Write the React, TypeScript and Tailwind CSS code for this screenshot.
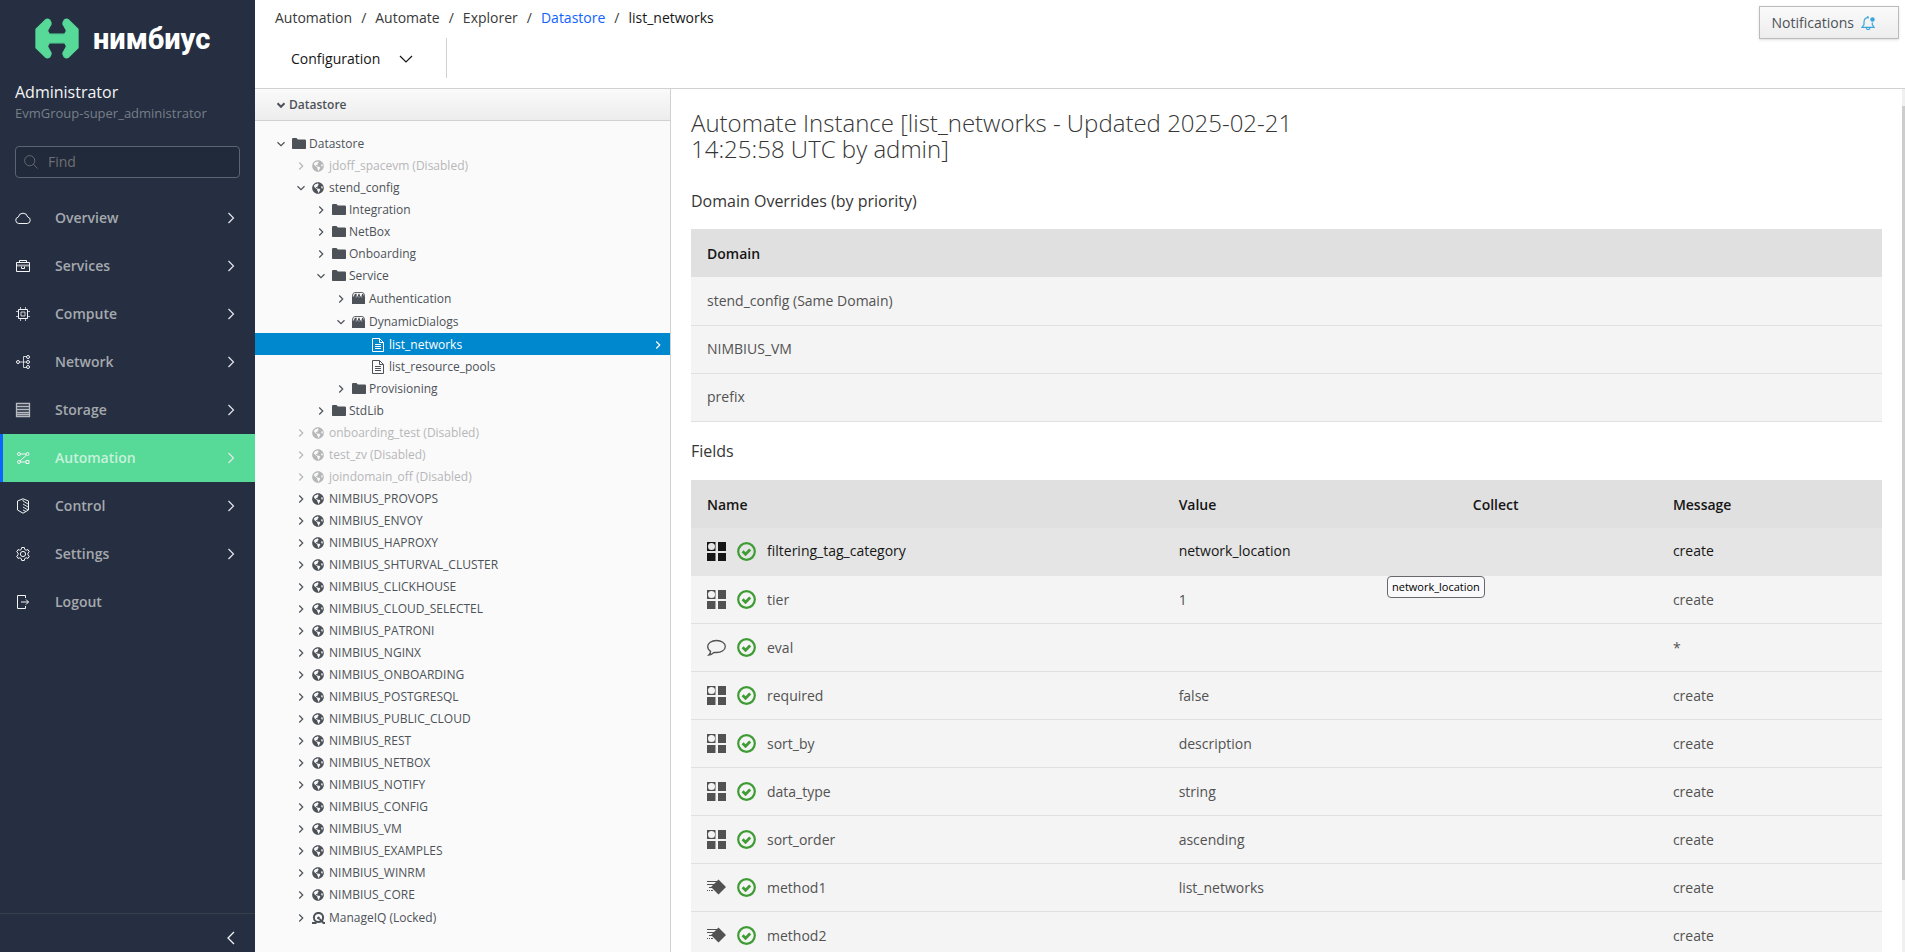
import React, { useState } from 'react';
import { FaGlobeAmericas } from 'react-icons/fa';

type TreeIcon = 'folder' | 'globe' | 'class' | 'file' | 'manageiq';

interface TreeNode {
  level: number;
  icon: TreeIcon;
  label: string;
  open?: boolean;
  leaf?: boolean;
  disabled?: boolean;
}

interface Field {
  icon: 'attribute' | 'assertion' | 'method';
  name: string;
  value: string;
  message: string;
}

const Svg: React.FC<{ children: React.ReactNode; className?: string }> = ({ children, className = 'w-4 h-4' }) => (
  <svg viewBox="0 0 16 16" className={`shrink-0 ${className}`} fill="none" stroke="currentColor" aria-hidden="true">
    {children}
  </svg>
);

const menu: { label: string; icon: React.ReactNode }[] = [
  {
    label: 'Overview',
    icon: <path d="M12.200 13.500H3.800a3.300 3.300 0 0 1-.5-6.500 4.800 4.800 0 0 1 9.400 0 3.300 3.300 0 0 1-.5 6.500z" />,
  },
  {
    label: 'Services',
    icon: (
      <>
        <path d="M1.5 4.5h13v9h-13zM4.5 4.500V2.500h7v2M6.500 8.500v2h3v-2" />
        <path d="M1.500 7.500h13" strokeOpacity=".6" strokeWidth="2" />
      </>
    ),
  },
  {
    label: 'Compute',
    icon: (
      <>
        <path d="M3.500 3.500h9v9h-9z" />
        <path d="M6 6h4v4H6z" strokeOpacity=".8" />
        <path d="M5.500 1v2m5-2v2m-5 10v2m5-2v2M1 5.500h2m-2 5h2m10-5h2m-2 5h2" strokeOpacity=".7" />
      </>
    ),
  },
  {
    label: 'Network',
    icon: (
      <>
        <circle cx="3" cy="8" r="1.500" />
        <circle cx="13" cy="3" r="1.500" />
        <circle cx="13" cy="8" r="1.500" />
        <circle cx="13" cy="13" r="1.500" />
        <path d="M4.500 8h7M11.500 2.500h-3v11h3" strokeOpacity=".8" />
      </>
    ),
  },
  {
    label: 'Storage',
    icon: <path d="M1.500 1.500h13v13h-13zM2 4.500h12M2 7.500h12M2 10.500h12M2 12.500h12" strokeOpacity=".7" strokeWidth="1.300" />,
  },
  {
    label: 'Automation',
    icon: (
      <>
        <circle cx="4" cy="4" r="1.500" />
        <circle cx="12.500" cy="4" r="1.500" />
        <circle cx="4" cy="12" r="1.500" />
        <path d="M11 10.500h3v3h-3zM5.500 4H11M5.500 12H11M5 11l6.500-6" />
      </>
    ),
  },
  {
    label: 'Control',
    icon: (
      <>
        <path d="M8 .8 2.500 3v9L8 15.200l5.500-3.200V3z" />
        <path d="m8 3 5 3M8 6l5 3M8 9l5 3M8 12l3 1.500M8 2v1" strokeOpacity=".9" />
      </>
    ),
  },
  {
    label: 'Settings',
    icon: (
      <>
        <circle cx="8" cy="8" r="2.600" />
        <path d="M6.700 1.500h2.600l.4 1.900 1.400.8 1.900-.6 1.300 2.200-1.400 1.300v1.800l1.400 1.300-1.300 2.200-1.900-.6-1.400.8-.4 1.900H6.700l-.4-1.900-1.400-.8-1.900.6-1.300-2.200 1.400-1.300V7.100L1.700 5.800 3 3.600l1.900.6 1.400-.8z" />
      </>
    ),
  },
  {
    label: 'Logout',
    icon: <path d="M10.500 4V1.500h-8v13h8V12M6 8h7.500M11 5.500 13.500 8 11 10.500" />,
  },
];

const domains = [
  'PROVOPS', 'ENVOY', 'HAPROXY', 'SHTURVAL_CLUSTER', 'CLICKHOUSE', 'CLOUD_SELECTEL', 'PATRONI',
  'NGINX', 'ONBOARDING', 'POSTGRESQL', 'PUBLIC_CLOUD', 'REST', 'NETBOX', 'NOTIFY', 'CONFIG', 'VM',
  'EXAMPLES', 'WINRM', 'CORE',
];

const tree: TreeNode[] = [
  { level: 0, icon: 'folder', label: 'Datastore', open: true },
  { level: 1, icon: 'globe', label: 'jdoff_spacevm (Disabled)', disabled: true },
  { level: 1, icon: 'globe', label: 'stend_config', open: true },
  { level: 2, icon: 'folder', label: 'Integration' },
  { level: 2, icon: 'folder', label: 'NetBox' },
  { level: 2, icon: 'folder', label: 'Onboarding' },
  { level: 2, icon: 'folder', label: 'Service', open: true },
  { level: 3, icon: 'class', label: 'Authentication' },
  { level: 3, icon: 'class', label: 'DynamicDialogs', open: true },
  { level: 4, icon: 'file', label: 'list_networks', leaf: true },
  { level: 4, icon: 'file', label: 'list_resource_pools', leaf: true },
  { level: 3, icon: 'folder', label: 'Provisioning' },
  { level: 2, icon: 'folder', label: 'StdLib' },
  { level: 1, icon: 'globe', label: 'onboarding_test (Disabled)', disabled: true },
  { level: 1, icon: 'globe', label: 'test_zv (Disabled)', disabled: true },
  { level: 1, icon: 'globe', label: 'joindomain_off (Disabled)', disabled: true },
  ...domains.map((name): TreeNode => ({ level: 1, icon: 'globe', label: `NIMBIUS_${name}` })),
  { level: 1, icon: 'manageiq', label: 'ManageIQ (Locked)' },
];

const indents = ['pl-[17px]', 'pl-[37px]', 'pl-[57px]', 'pl-[77px]', 'pl-[97px]'];

const rowHeight = ({ icon, open }: TreeNode) => {
  if (icon !== 'class' && icon !== 'manageiq') return 'h-[22px]';
  return open ? 'h-6' : 'h-[23px]';
};

const overrides = ['stend_config (Same Domain)', 'NIMBIUS_VM', 'prefix'];

const fields: Field[] = [
  { icon: 'attribute', name: 'filtering_tag_category', value: 'network_location', message: 'create' },
  { icon: 'attribute', name: 'tier', value: '1', message: 'create' },
  { icon: 'assertion', name: 'eval', value: '', message: '*' },
  { icon: 'attribute', name: 'required', value: 'false', message: 'create' },
  { icon: 'attribute', name: 'sort_by', value: 'description', message: 'create' },
  { icon: 'attribute', name: 'data_type', value: 'string', message: 'create' },
  { icon: 'attribute', name: 'sort_order', value: 'ascending', message: 'create' },
  { icon: 'method', name: 'method1', value: 'list_networks', message: 'create' },
  { icon: 'method', name: 'method2', value: '', message: 'create' },
];

const Logo = () => (
  <div className="flex items-center gap-[14px] pl-[35px] pt-[18px]">
    <svg viewBox="0 0 132 122" className="w-11 h-[41px]" fill="#57d998" stroke="#57d998" strokeWidth="4" strokeLinejoin="round" aria-hidden="true">
      <path d="M3 33 33 4q5-2 11 2l4 8q1 6-3 9l-6 11q-3 5 1 9l3 5h46l3-5q4-4 1-9l-6-11q-4-3-3-9l4-8q6-4 11-2l30 29v56l-30 29q-5 2-11-2l-4-8q-1-6 3-9l6-11q3-5-1-9l-3-5H43l-3 5q-4 4-1 9l6 11q4 3 3 9l-4 8q-6 4-11 2L3 89z" />
    </svg>
    <span className="font-[Roboto,sans-serif] text-[29px] leading-[38px] font-extrabold text-white">нимбиус</span>
  </div>
);

const Angle: React.FC<{ open?: boolean; bold?: boolean }> = ({ open, bold }) => (
  <Svg className="w-2 h-2">
    <path d={open ? 'M1 4.500l7 7 7-7' : 'M4.500 1l7 7-7 7'} strokeWidth={bold ? 4 : 2.400} />
  </Svg>
);

const NodeIcon: React.FC<{ type: TreeIcon }> = ({ type }) => {
  switch (type) {
    case 'folder':
      return (
        <svg viewBox="0 0 15 12" className="w-[14px] h-[11px] mb-0.5" fill="currentColor" aria-hidden="true" preserveAspectRatio="none">
          <path d="M0 1.200Q0 0 1.200 0h3.600L6.300 1.700h7.500Q15 1.700 15 3v8.200q0 .8-.8.8H.8Q0 12 0 11.200z" />
        </svg>
      );
    case 'globe':
      return <FaGlobeAmericas className="w-3 h-3" />;
    case 'class':
      return (
        <svg viewBox="0 0 14 13" className="w-[13px] h-3 mb-px" aria-hidden="true" preserveAspectRatio="none">
          <path d="M2.500.5h9q2 .5 2 4.500v7.500H.500V5q0-4 2-4.500z" fill="none" stroke="currentColor" />
          <path d="M0 5h14v8H0zM3 2h2v3H2zm4 0h1l1 3H6zm4 0h1l1 3h-3z" fill="currentColor" />
          <path d="M4 5h1v1H4zm3 0h1v1H7zm3 0h1v1h-1z" fill="#ddd" />
        </svg>
      );
    case 'file':
      return (
        <svg viewBox="0 0 12 14" className="w-3 h-[14px]" fill="none" stroke="currentColor" aria-hidden="true">
          <path d="M.5.500h7l4 4v9H.500zM7.500.500v4h4M3 6.500h6M3 8.500h6M3 10.500h6" />
        </svg>
      );
    default:
      return (
        <svg viewBox="0 0 13 12" className="w-[13px] h-3" fill="none" stroke="currentColor" aria-hidden="true">
          <circle cx="6.500" cy="5.500" r="4.600" strokeWidth="2" />
          <path d="M0 11h4.500M7.500 7l4 4H13" strokeWidth="1.800" />
          <circle cx="6.500" cy="6" r="1" fill="currentColor" />
        </svg>
      );
  }
};

const FieldIcon: React.FC<{ type: Field['icon'] }> = ({ type }) => {
  if (type === 'attribute') {
    return (
      <svg viewBox="0 0 19 19" className="w-[19px] h-[19px]" fill="currentColor" aria-hidden="true">
        <path d="M11 0h8v9h-8zM0 11h8v8H0zM11 11h8v8h-8zM0 0h8v9H0zM4.500 1Q1 1 1 4.500T4.500 8 8 4.500 4.500 1z" fillRule="evenodd" />
        <path d="M8.500 0v9M8.500 11v8" stroke="currentColor" strokeOpacity=".5" />
      </svg>
    );
  }
  if (type === 'assertion') {
    return (
      <svg viewBox="0 0 19 19" className="w-[19px] h-[19px]" fill="none" stroke="currentColor" strokeWidth="1.300" aria-hidden="true">
        <path d="M9.500 2.500c5 0 8.800 2.600 8.800 6s-3.800 6-8.800 6l-2.200-.2c-1.600 1.500-3.300 2.500-5.500 2.700 1-.9 1.600-2 1.800-3.600C1.800 12.200.7 10.500.7 8.500c0-3.400 3.800-6 8.800-6z" />
      </svg>
    );
  }
  return (
    <svg viewBox="0 0 19 19" className="w-[19px] h-[19px]" fill="currentColor" aria-hidden="true">
      <path d="M11.500 1.500 19 9l-7.500 7.500L4 9zM0 3h10v1H0zM0 6h7v1H0zM2 9h3v1H2zM0 12h1v1H0zM2 12h1v1H2zM4 12h2v1H4z" />
    </svg>
  );
};

const OkIcon = () => (
  <svg viewBox="0 0 19 19" className="w-[19px] h-[19px] text-[#3f9c35]" fill="none" stroke="currentColor" role="img" aria-label="Ok">
    <circle cx="9.500" cy="9.500" r="8.300" strokeWidth="2.200" />
    <path d="m5.600 9.300 2.900 2.900 4.700-4.700" strokeWidth="2.800" />
  </svg>
);

const Sidebar = () => (
  <aside className="w-[255px] shrink-0 flex flex-col bg-[#252f41] text-[#f4f4f4]">
    <Logo />
    <div className="px-[15px] pt-[21px]">
      <div className="text-base leading-6">Administrator</div>
      <div className="text-[13px] leading-[18px] text-[#787e89]">EvmGroup-super_administrator</div>
      <label className="mt-6 flex items-center h-8 px-2 gap-[10px] rounded border border-[#5b6473] bg-[#212a3a] text-[#6f6f73]">
        <Svg className="w-[14px] h-[14px]">
          <circle cx="6.500" cy="6.500" r="5.800" />
          <path d="m10.500 10.500 5 5" />
        </Svg>
        <input type="text" placeholder="Find" aria-label="Find" className="w-full bg-transparent outline-none placeholder:text-[#6f6f73]" />
      </label>
    </div>
    <nav className="mt-4 flex-1">
      {menu.map(({ label, icon }) => {
        const active = label === 'Automation';
        return (
          <a
            key={label}
            href="#"
            className={`flex items-center h-12 pl-3 pr-4 border-l-[3px] font-semibold ${
              active ? 'border-[#0f62fe] bg-[#57d998] text-[#c6f2db]' : 'border-transparent text-[#a5a9ae]'
            }`}
          >
            <Svg className="w-4 h-4 text-[#f4f4f4]">{icon}</Svg>
            <span className="ml-6 flex-1">{label}</span>
            {label !== 'Logout' && (
              <Svg className="w-4 h-4 text-[#e6e8ea]">
                <path d="m5.500 3 5 5-5 5" strokeWidth="1.200" />
              </Svg>
            )}
          </a>
        );
      })}
    </nav>
    <div className="flex justify-end h-[39px] pt-4 pr-4 border-t border-[#393f49]">
      <button type="button" aria-label="Collapse" className="h-4">
        <Svg>
          <path d="M11 2 5 8l6 6" strokeWidth="1.300" />
        </Svg>
      </button>
    </div>
  </aside>
);

const Tree = () => {
  const [selected, setSelected] = useState('list_networks');

  return (
    <section className="w-[416px] shrink-0 border-r border-[#d1d1d1] bg-[#fafafa] text-[#4d5258] text-xs overflow-hidden">
      <h2 className="border-b border-[#d1d1d1] bg-linear-to-b from-[#fafafa] to-[#ededed]">
        <button type="button" className="flex items-center gap-1 w-full h-[31px] pl-[22px] font-semibold">
          <Angle open bold />
          Datastore
        </button>
      </h2>
      <ul className="pt-[11px]">
        {tree.map((node) => {
          const active = node.label === selected;
          return (
            <li key={node.label}>
              <button
                type="button"
                onClick={() => setSelected(node.label)}
                className={`flex items-center w-full pt-0.5 pr-2 text-left ${indents[node.level]} ${rowHeight(node)} ${
                  active ? 'bg-[#0088ce] text-white' : node.disabled ? 'text-[#b6b7b9]' : ''
                }`}
              >
                <span className="w-5 flex justify-center pr-[3px]">{!node.leaf && <Angle open={node.open} />}</span>
                <span className="w-[17px]">
                  <NodeIcon type={node.icon} />
                </span>
                <span className="flex-1">{node.label}</span>
                {active && <Angle />}
              </button>
            </li>
          );
        })}
      </ul>
    </section>
  );
};

const th = 'h-12 px-4 pt-0.5 text-left font-semibold text-[#161616] bg-[#e0e0e0]';

const Details = () => (
  <section className="flex-1 min-w-0 flex overflow-hidden">
    <div className="flex-1 pl-5 pr-5 pt-[21px] text-[#363636]">
      <h1 className="max-w-[640px] text-2xl leading-[26px] font-light">
        Automate Instance [list_networks - Updated 2025-02-21 14:25:58 UTC by admin]
      </h1>
      <h3 className="mt-[25px] text-base leading-7">Domain Overrides (by priority)</h3>
      <table className="mt-[14px] w-full text-[#525252]">
        <thead>
          <tr>
            <th className={th}>Domain</th>
          </tr>
        </thead>
        <tbody>
          {overrides.map((domain) => (
            <tr key={domain} className="bg-[#f4f4f4] border-b border-[#e0e0e0]">
              <td className="h-12 px-4">{domain}</td>
            </tr>
          ))}
        </tbody>
      </table>
      <h3 className="mt-[15px] text-base leading-7">Fields</h3>
      <table className="mt-[15px] w-full table-fixed text-[#525252]">
        <thead>
          <tr>
            <th className={`${th} w-[39.6%]`}>Name</th>
            <th className={`${th} w-[24.7%]`}>Value</th>
            <th className={`${th} w-[16.8%]`}>Collect</th>
            <th className={th}>Message</th>
          </tr>
        </thead>
        <tbody>
          {fields.map(({ icon, name, value, message }, i) => (
            <tr key={name} className={`border-b ${i === 0 ? 'bg-[#e5e5e5] border-[#e5e5e5] text-[#161616]' : 'bg-[#f4f4f4] border-[#e0e0e0]'}`}>
              <td className="h-12 px-4">
                <div className="flex items-center gap-[11px]">
                  <FieldIcon type={icon} />
                  <OkIcon />
                  {name}
                </div>
              </td>
              <td className="px-4">{value}</td>
              <td className="px-4 relative">
                {i === 0 && (
                  <span role="tooltip" className="absolute right-[172px] top-12 z-10 px-1 text-[11px] leading-5 text-black bg-[#f9f9fb] border border-[#67676c] rounded">
                    network_location
                  </span>
                )}
              </td>
              <td className="px-4">{message}</td>
            </tr>
          ))}
        </tbody>
      </table>
    </div>
    <div className="w-[3px] pt-[17px] pb-[72px] bg-[#f0f0f0]">
      <div className="h-full bg-[#cdcdcd]" />
    </div>
  </section>
);

const crumbs = ['Automation', 'Automate', 'Explorer', 'Datastore'];

export default function App() {
  return (
    <div className="flex h-screen overflow-hidden bg-white font-['Open_Sans',sans-serif] text-sm text-[#161616]">
      <Sidebar />
      <main className="flex-1 min-w-0 flex flex-col">
        <header className="flex justify-between h-[89px] shrink-0 border-b border-[#d1d1d1]">
          <div className="pl-5">
            <nav aria-label="Breadcrumb" className="flex pt-2 leading-5 text-[#393939]">
              {crumbs.map((crumb) => (
                <React.Fragment key={crumb}>
                  <a href="#" className={crumb === 'Datastore' ? 'text-[#0f62fe]' : ''}>{crumb}</a>
                  <span className="px-[9px]">/</span>
                </React.Fragment>
              ))}
              <span className="text-[#161616]">list_networks</span>
            </nav>
            <div className="mt-[10px] inline-flex border-r border-[#d1d1d1]">
              <button type="button" className="flex items-center gap-[18px] h-10 pl-4 pr-8 pt-px">
                Configuration
                <Svg>
                  <path d="m2 5 6 6 6-6" strokeWidth="1.200" />
                </Svg>
              </button>
            </div>
          </div>
          <button
            type="button"
            className="flex items-center gap-1 mt-[6px] mr-[6px] h-[33px] pl-3 pr-[22px] border border-[#bbb] bg-linear-to-b from-[#fafafa] to-[#ededed] text-[#4d5258] shadow"
          >
            Notifications
            <svg viewBox="0 0 16 16" className="ml-0.5 w-4 h-4 text-[#39a5dc]" fill="none" stroke="currentColor" aria-hidden="true">
              <path d="M9 2.800C6 2 4 4.200 4 7v2.500L2 12.300h12l-1.700-2.800V7.500M6.300 12.800a1.800 1.800 0 0 0 3.600 0M7.800 1v1.500" strokeWidth="1.200" />
              <circle cx="12.500" cy="4.500" r="2.200" fill="currentColor" stroke="none" />
            </svg>
          </button>
        </header>
        <div className="flex flex-1 min-h-0">
          <Tree />
          <Details />
        </div>
      </main>
    </div>
  );
}
